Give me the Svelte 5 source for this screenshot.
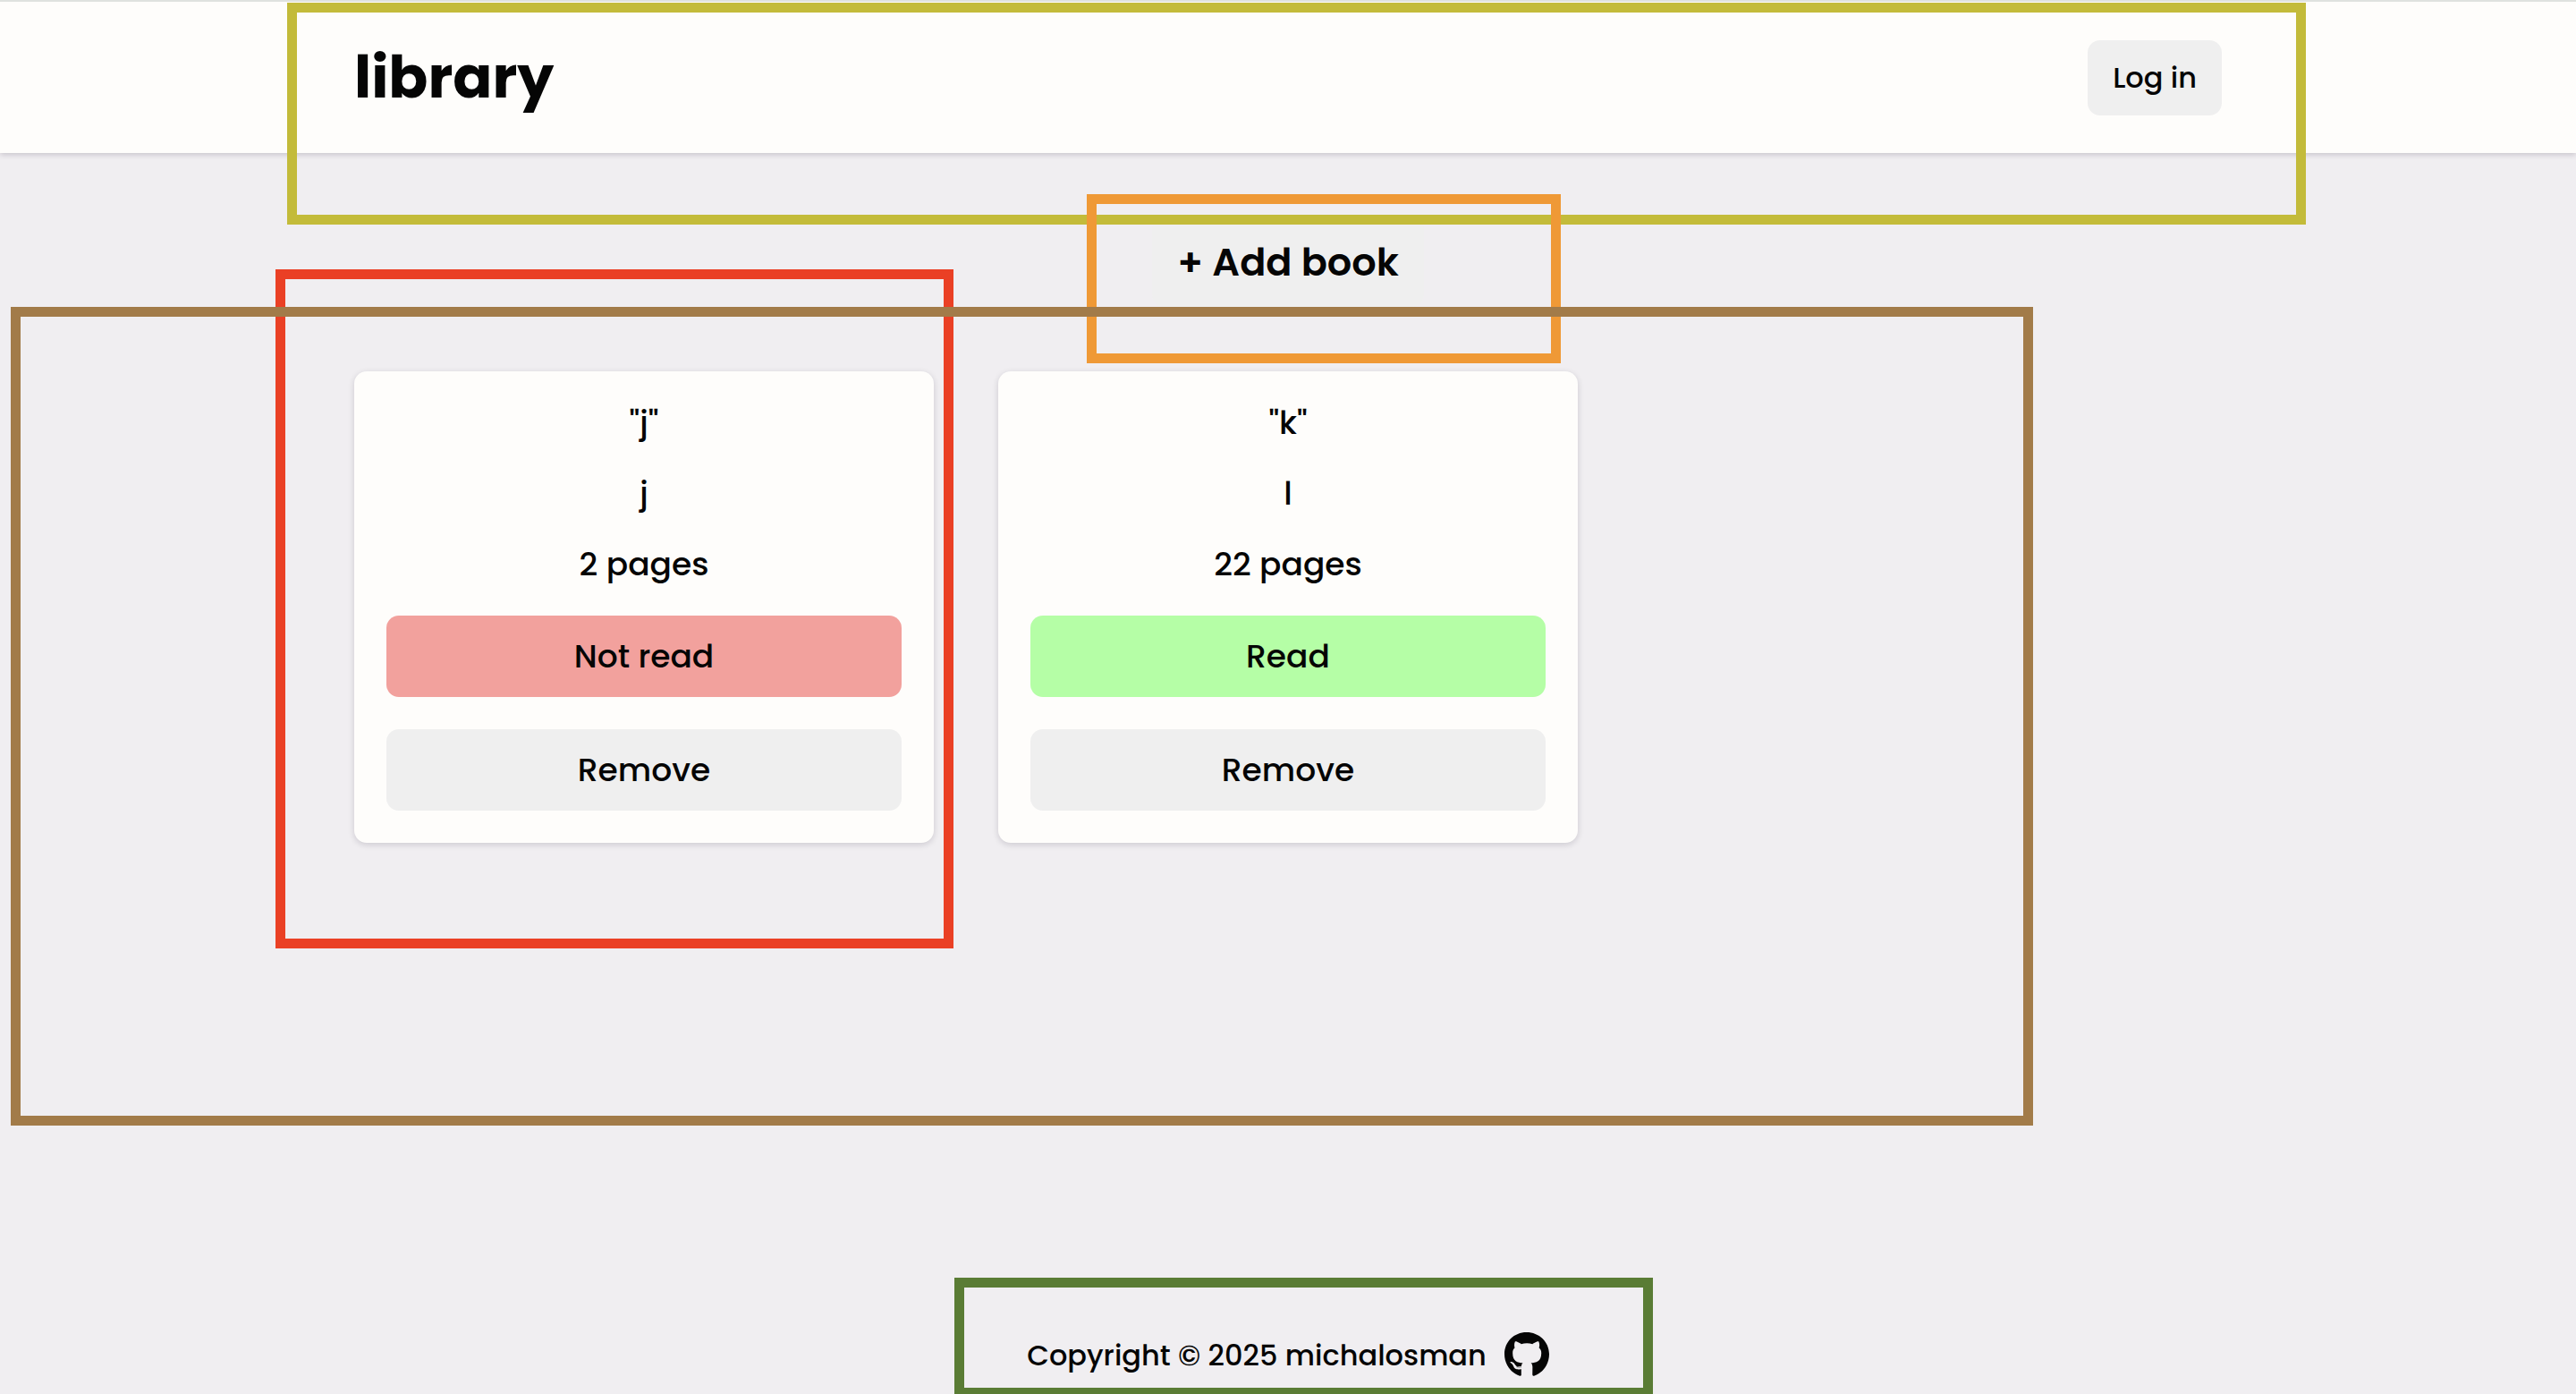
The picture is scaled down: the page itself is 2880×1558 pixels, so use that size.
<script>
  let books = $state([
    { title: 'j', author: 'j', pages: 2, read: false },
    { title: 'k', author: 'l', pages: 22, read: true },
  ]);

  const outlines = ['header', 'card', 'add', 'grid', 'footer'];

  function remove(index) {
    books.splice(index, 1);
  }
</script>

<div class="page">
  <header>
    <div class="bar">
      <h1>library</h1>
      <button class="login" type="button">Log in</button>
    </div>
  </header>

  <main>
    <button class="add-book" type="button">+ Add book</button>
    <div class="books">
      {#each books as book, i}
        <article class="book">
          <p>"{book.title}"</p>
          <p>{book.author}</p>
          <p>{book.pages} pages</p>
          <button
            type="button"
            class={book.read ? 'read' : 'unread'}
            onclick={() => (book.read = !book.read)}
          >{book.read ? 'Read' : 'Not read'}</button>
          <button type="button" onclick={() => remove(i)}>Remove</button>
        </article>
      {/each}
    </div>
  </main>

  <footer>
    <p>Copyright © 2025 michalosman</p>
    <a href="https://github.com/michalosman" aria-label="GitHub">
      <svg viewBox="0 0 496 512" aria-hidden="true">
        <path d="M165.900 397.400c0 2-2.300 3.600-5.200 3.600-3.300.300-5.600-1.300-5.600-3.600 0-2 2.300-3.600 5.200-3.600 3-.300 5.600 1.300 5.600 3.600zm-31.100-4.500c-.700 2 1.300 4.300 4.300 4.900 2.600 1 5.600 0 6.200-2s-1.300-4.300-4.300-5.200c-2.600-.700-5.500.300-6.200 2.300zm44.200-1.700c-2.900.700-4.900 2.600-4.600 4.900.300 2 2.900 3.300 5.900 2.600 2.900-.700 4.900-2.600 4.600-4.600-.300-1.900-3-3.200-5.900-2.900zM244.800 8C106.100 8 0 113.300 0 252c0 110.900 69.800 205.800 169.500 239.200 12.800 2.300 17.300-5.600 17.300-12.100 0-6.200-.300-40.400-.300-61.400 0 0-70 15-84.700-29.800 0 0-11.400-29.100-27.800-36.600 0 0-22.900-15.700 1.600-15.400 0 0 24.900 2 38.600 25.800 21.900 38.600 58.600 27.500 72.900 20.900 2.300-16 8.800-27.100 16-33.700-55.900-6.200-112.300-14.300-112.300-110.500 0-27.500 7.600-41.300 23.600-58.900-2.600-6.500-11.100-33.300 2.600-67.900 20.900-6.500 69 27 69 27 20-5.600 41.500-8.500 62.800-8.500s42.800 2.900 62.800 8.500c0 0 48.100-33.600 69-27 13.700 34.700 5.200 61.400 2.600 67.900 16 17.700 25.800 31.500 25.800 58.900 0 96.500-58.900 104.200-114.800 110.500 9.200 7.900 17 22.900 17 46.400 0 33.700-.300 75.400-.300 83.600 0 6.500 4.600 14.400 17.300 12.100C428.200 457.800 496 362.900 496 252 496 113.300 383.500 8 244.800 8z" />
      </svg>
    </a>
  </footer>

  {#each outlines as name}
    <div class="outline {name}-outline" aria-hidden="true"></div>
  {/each}
</div>

<style>
  :global(body) {
    margin: 0;
    background: #f0eef1;
  }

  .page,
  .page * {
    box-sizing: border-box;
  }

  .page {
    position: relative;
    display: flex;
    flex-direction: column;
    min-height: 100vh;
    overflow: hidden;
    color: #050505;
    font-family: Poppins, Inter, 'Open Sans', sans-serif;
    font-size: 36px;
    font-weight: 500;
    line-height: 43px;
  }

  h1,
  p {
    margin: 0;
  }

  button {
    padding: 24px 28px;
    border: 0;
    border-radius: 14px;
    background: #efefef;
    color: inherit;
    font: inherit;
    cursor: pointer;
  }

  header {
    padding: 0 72px;
    border-top: 2px solid #dfe2df;
    background: #fefdfb;
    box-shadow: 0 2px 6px rgba(20, 10, 40, 0.18);
  }

  .bar,
  .books {
    width: 100%;
    max-width: 2088px;
    margin: 0 auto;
  }

  .bar {
    display: flex;
    align-items: center;
    justify-content: space-between;
    padding: 43px 0 42px;
  }

  h1 {
    font-size: 65px;
    font-weight: 700;
    line-height: 84px;
  }

  .login {
    padding: 20px 28px;
    font-size: 32px;
    line-height: 44px;
  }

  main {
    display: flex;
    flex: 1;
    flex-direction: column;
    align-items: center;
    gap: 72px;
    padding: 72px;
  }

  .add-book {
    font-size: 43px;
    font-weight: 600;
    line-height: 52px;
  }

  .books {
    display: grid;
    grid-template-columns: repeat(3, 1fr);
    gap: 72px;
  }

  .book {
    display: flex;
    flex-direction: column;
    gap: 36px;
    padding: 36px;
    border-radius: 14px;
    background: #fefdfb;
    box-shadow: 0 2px 7px rgba(20, 10, 40, 0.16);
    text-align: center;
  }

  .book .unread {
    background: #f2a19d;
  }

  .book .read {
    background: #b5fea6;
  }

  footer {
    display: flex;
    align-items: center;
    justify-content: center;
    gap: 20px;
    padding: 18px;
    font-size: 32px;
  }

  footer a {
    display: flex;
    color: inherit;
  }

  footer svg {
    width: 50px;
    height: 52px;
    fill: currentColor;
  }

  .outline {
    position: absolute;
    border: 11px solid;
    pointer-events: none;
  }

  .header-outline {
    top: 3px;
    left: 321px;
    width: 2257px;
    height: 248px;
    border-color: #c3bb3a;
  }

  .card-outline {
    top: 301px;
    left: 308px;
    width: 758px;
    height: 759px;
    border-color: #ea4025;
  }

  .add-outline {
    top: 217px;
    left: 1215px;
    width: 530px;
    height: 189px;
    border-color: #ef9936;
  }

  .grid-outline {
    top: 343px;
    left: 12px;
    width: 2261px;
    height: 915px;
    border-color: #a27b49;
  }

  .footer-outline {
    top: 1428px;
    left: 1067px;
    width: 781px;
    height: 134px;
    border-color: #5a7c35;
  }
</style>
